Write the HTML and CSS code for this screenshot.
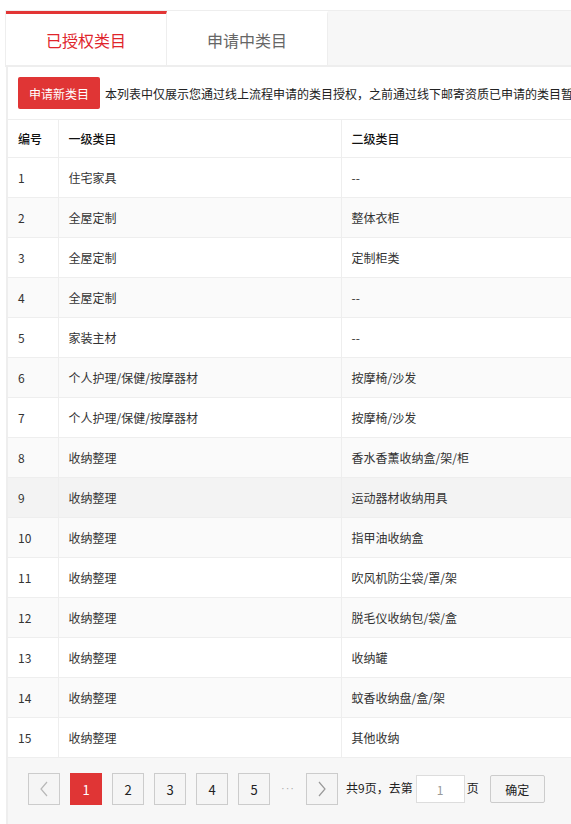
FILE: index.html
```html
<!DOCTYPE html>
<html lang="zh-CN">
<head>
<meta charset="utf-8">
<title>已授权类目</title>
<link rel="stylesheet" href="styles.css">
</head>
<body>
<div class="page">
  <div class="tabs">
    <div class="tab active">已授权类目</div>
    <div class="tab">申请中类目</div>
  </div>
  <div class="panel">
    <div class="toolbar">
      <button class="btn-apply">申请新类目</button>
      <span class="notice">本列表中仅展示您通过线上流程申请的类目授权，之前通过线下邮寄资质已申请的类目暂</span>
    </div>
    <table class="grid">
      <colgroup><col class="c1"><col class="c2"><col class="c3"></colgroup>
      <thead>
        <tr><th>编号</th><th>一级类目</th><th>二级类目</th></tr>
      </thead>
      <tbody>
        <tr><td>1</td><td>住宅家具</td><td>--</td></tr>
        <tr><td>2</td><td>全屋定制</td><td>整体衣柜</td></tr>
        <tr><td>3</td><td>全屋定制</td><td>定制柜类</td></tr>
        <tr><td>4</td><td>全屋定制</td><td>--</td></tr>
        <tr><td>5</td><td>家装主材</td><td>--</td></tr>
        <tr><td>6</td><td>个人护理/保健/按摩器材</td><td>按摩椅/沙发</td></tr>
        <tr><td>7</td><td>个人护理/保健/按摩器材</td><td>按摩椅/沙发</td></tr>
        <tr><td>8</td><td>收纳整理</td><td>香水香薰收纳盒/架/柜</td></tr>
        <tr class="hover"><td>9</td><td>收纳整理</td><td>运动器材收纳用具</td></tr>
        <tr><td>10</td><td>收纳整理</td><td>指甲油收纳盒</td></tr>
        <tr><td>11</td><td>收纳整理</td><td>吹风机防尘袋/罩/架</td></tr>
        <tr><td>12</td><td>收纳整理</td><td>脱毛仪收纳包/袋/盒</td></tr>
        <tr><td>13</td><td>收纳整理</td><td>收纳罐</td></tr>
        <tr><td>14</td><td>收纳整理</td><td>蚊香收纳盘/盒/架</td></tr>
        <tr><td>15</td><td>收纳整理</td><td>其他收纳</td></tr>
      </tbody>
    </table>
    <div class="pager">
      <a class="pg arrow"><svg width="10" height="16" viewBox="0 0 10 16"><path d="M8 1 L2 8 L8 15" fill="none" stroke="#b8b8b8" stroke-width="1.2"/></svg></a>
      <a class="pg current">1</a>
      <a class="pg">2</a>
      <a class="pg">3</a>
      <a class="pg">4</a>
      <a class="pg">5</a>
      <span class="dots">···</span>
      <a class="pg arrow"><svg width="10" height="16" viewBox="0 0 10 16"><path d="M2 1 L8 8 L2 15" fill="none" stroke="#999" stroke-width="1.2"/></svg></a>
      <span class="total">共9页，去第</span>
      <input class="jump" type="text" value="1">
      <span class="unit">页</span>
      <button class="btn-ok">确定</button>
    </div>
  </div>
</div>
</body>
</html>
```
FILE: styles.css
```css
html, body {
  margin: 0;
  padding: 0;
  background: #fff;
  overflow: hidden;
  height: 824px;
}
body {
  font-family: "Noto Sans CJK SC", "Noto Sans", "Liberation Sans", sans-serif;
  font-size: 12px;
  color: #333;
}
.page {
  width: 820px;
}
.tabs {
  display: flex;
  margin: 10px 0 0 5px;
  border-top: 1px solid #eee;
  border-left: 1px solid #eee;
  border-bottom: 2px solid #eee;
  background: #f7f7f7;
}
.tab {
  box-sizing: border-box;
  width: 161px;
  height: 54px;
  background: #fff;
  border-right: 1px solid #eee;
  border-top: 3px solid #fff;
  display: flex;
  align-items: center;
  justify-content: center;
  font-size: 16px;
  color: #666;
}
.tab.active {
  border-top-color: #e23535;
  color: #e0252b;
}
.panel {
  margin-left: 6px;
  border-left: 2px solid #eee;
  background: #fff;
}
.toolbar {
  display: flex;
  align-items: center;
  padding: 10px;
  white-space: nowrap;
}
.btn-apply {
  width: 82px;
  height: 32px;
  border: 0;
  border-radius: 2px;
  background: #e03535;
  color: #fff;
  font-family: inherit;
  font-size: 12px;
  padding: 0;
  flex: none;
}
.notice {
  margin-left: 5px;
  color: #222;
}
.grid {
  width: 812px;
  border-collapse: collapse;
  table-layout: fixed;
  border-top: 1px solid #eee;
}
.c1 { width: 50px; }
.c2 { width: 283px; }
.grid th, .grid td {
  text-align: left;
  padding: 0 10px;
  border-bottom: 1px solid #eee;
  border-right: 1px solid #eee;
  white-space: nowrap;
}
.grid th {
  height: 37px;
  font-weight: 500;
  color: #111;
}
.grid td {
  height: 39px;
  color: #333;
}
.grid tbody tr:nth-child(even) { background: #fafafa; }
.grid tbody tr.hover { background: #f3f3f3; }
.pager {
  display: flex;
  align-items: flex-start;
  background: #f7f7f7;
  padding: 15px 20px 0;
  height: 120px;
}
.pg {
  box-sizing: border-box;
  width: 32px;
  height: 32px;
  border: 1px solid #ccc;
  background: #f5f5f5;
  display: flex;
  align-items: center;
  justify-content: center;
  margin-right: 10px;
  color: #222;
  font-size: 13px;
}
.pg.current {
  background: #e03535;
  border-color: #e03535;
  color: #fff;
}
.dots {
  width: 16px;
  height: 32px;
  line-height: 30px;
  margin-right: 10px;
  color: #aaa;
  text-align: center;
  font-family: "Liberation Sans", sans-serif;
  font-size: 11px;
  letter-spacing: 1px;
  white-space: nowrap;
}
.total {
  height: 32px;
  line-height: 30px;
  margin-left: -2px;
  color: #222;
}
.jump {
  box-sizing: border-box;
  width: 49px;
  height: 28px;
  margin: 2px 0 0 3px;
  border: 1px solid #ddd;
  background: #fff;
  text-align: center;
  color: #999;
  font-family: inherit;
  font-size: 12px;
  padding: 0;
  outline: none;
}
.unit {
  height: 32px;
  line-height: 30px;
  margin-left: 2px;
  color: #222;
}
.btn-ok {
  box-sizing: border-box;
  width: 55px;
  height: 28px;
  margin: 2px 0 0 11px;
  border: 1px solid #ccc;
  border-radius: 2px;
  background: #f5f5f5;
  color: #222;
  font-family: inherit;
  font-size: 12px;
  padding: 0;
}
```
